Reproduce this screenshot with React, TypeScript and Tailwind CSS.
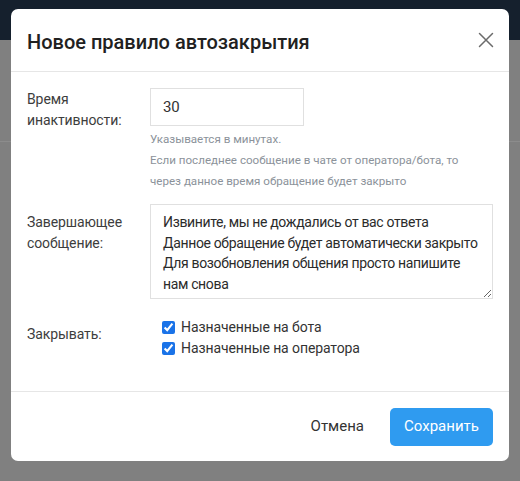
import type { JSX } from "react";

const FONT = "font-['Roboto','Noto_Sans',sans-serif]";

function CloseIcon() {
  return (
    <svg width="16" height="16" viewBox="0 0 16 16" fill="none" stroke="#6b6b6b" strokeWidth="1.5" strokeLinecap="round">
      <path d="M1.5 1.5l13 13M14.5 1.5l-13 13" />
    </svg>
  );
}

function CheckRow(props: { label: string }) {
  return (
    <label className="flex items-center h-[21px] pl-[12px] gap-[6px] text-[14px] tracking-[-0.1px] text-[#333]">
      <input type="checkbox" defaultChecked className="w-[13px] h-[13px] m-0 accent-[#1a73e8]" />
      <span>{props.label}</span>
    </label>
  );
}

export default function App(): JSX.Element {
  return (
    <div className={`relative w-[520px] h-[481px] overflow-hidden bg-[#808080] ${FONT}`}>
      {/* page under the backdrop */}
      <div className="h-[40px] bg-[#15202d]" />
      <div className="mt-[101px] border-t border-[#8c8c8c]" />

      {/* modal */}
      <div className="absolute left-[11px] top-[9px] w-[498px] h-[452px] bg-white rounded-[7px] flex flex-col">
        <div className="h-[63px] shrink-0 flex items-center justify-between pl-4 pr-[15px] border-b border-[#e6e6e6]">
          <h2 className="text-[20px] font-medium text-[#212121] pt-[3px]">Новое правило автозакрытия</h2>
          <button type="button" className="p-0">
            <CloseIcon />
          </button>
        </div>

        <div className="flex-1 px-4 pt-4 text-[14px] tracking-[-0.1px] text-[#3d3d3d]">
          <div className="flex">
            <div className="w-[123px] shrink-0 pt-[1px] leading-[21px]">
              Время
              <br />
              инактивности:
            </div>
            <div>
              <input
                type="text"
                defaultValue="30"
                className="w-[154px] h-[38px] border border-[#e0e0e0] px-[12px] text-[15px] text-[#333] outline-none"
              />
              <div className="mt-[3px] text-[11.6px] tracking-normal leading-[21px] text-[#8b929a]">
                Указывается в минутах.
                <br />
                Если последнее сообщение в чате от оператора/бота, то
                <br />
                через данное время обращение будет закрыто
              </div>
            </div>
          </div>

          <div className="flex mt-[12px]">
            <div className="w-[123px] shrink-0 pt-[8px] leading-[20.5px]">
              Завершающее
              <br />
              сообщение:
            </div>
            <textarea
              className="w-[343px] h-[95px] border border-[#e0e0e0] pl-[12px] pr-[8px] py-[7px] text-[14px] tracking-[-0.35px] leading-[20.5px] text-[#2b2b2b] outline-none"
              defaultValue={
                "Извините, мы не дождались от вас ответа\nДанное обращение будет автоматически закрыто\nДля возобновления общения просто напишите\nнам снова"
              }
            />
          </div>

          <div className="flex mt-[18px]">
            <div className="w-[123px] shrink-0 pt-[7px] leading-[21px]">Закрывать:</div>
            <div className="flex flex-col">
              <CheckRow label="Назначенные на бота" />
              <CheckRow label="Назначенные на оператора" />
            </div>
          </div>
        </div>

        <div className="h-[70px] shrink-0 border-t border-[#e6e6e6] flex items-center justify-end pr-4">
          <button type="button" className="mr-[26px] text-[15px] text-[#333]">
            Отмена
          </button>
          <button type="button" className="w-[103px] h-[38px] rounded-[5px] bg-[#2f9bf0] text-white text-[15px]">
            Сохранить
          </button>
        </div>
      </div>
    </div>
  );
}
